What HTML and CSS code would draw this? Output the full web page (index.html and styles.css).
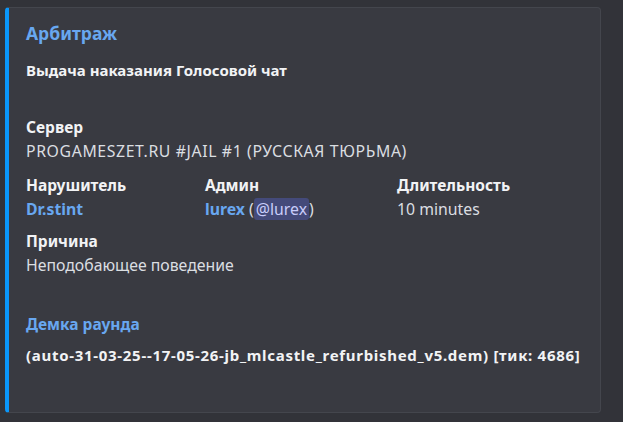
FILE: index.html
```html
<!DOCTYPE html>
<html lang="ru">
<head>
    <meta charset="UTF-8">
    <meta name="viewport" content="width=device-width, initial-scale=1.0">
    <title>Арбитраж</title>
    <link rel="stylesheet" href="styles.css">
</head>
<body>
    <div class="embed">
        <div class="embed-title">Арбитраж</div>
        <div class="embed-desc">Выдача наказания Голосовой чат</div>

        <div class="field field-server">
            <div class="field-name">Сервер</div>
            <div class="field-value caps">PROGAMESZET.RU #JAIL #1 (РУССКАЯ ТЮРЬМА)</div>
        </div>

        <div class="field-row">
            <div class="field">
                <div class="field-name">Нарушитель</div>
                <div class="field-value"><span class="link">Dr.stint</span></div>
            </div>
            <div class="field">
                <div class="field-name">Админ</div>
                <div class="field-value"><span class="link">lurex</span> (<span class="mention">@lurex</span>)</div>
            </div>
            <div class="field">
                <div class="field-name">Длительность</div>
                <div class="field-value">10 minutes</div>
            </div>
        </div>

        <div class="field field-reason">
            <div class="field-name">Причина</div>
            <div class="field-value">Неподобающее поведение</div>
        </div>

        <div class="field field-demo">
            <div class="field-name link">Демка раунда</div>
            <div class="field-value demo-file">(auto-31-03-25--17-05-26-jb_mlcastle_refurbished_v5.dem) [тик: 4686]</div>
        </div>
    </div>
</body>
</html>
```

FILE: styles.css
```css
body {
    margin: 0;
    padding: 7px 22px 9px 5px;
    background: #323339;
    font-family: 'Noto Sans', sans-serif;
    color: #dbdee1;
}
.embed {
    height: 406px;
    box-sizing: border-box;
    background: #393a41;
    border: 1px solid #44464d;
    border-left: 4px solid #0a97fb;
    border-radius: 4px;
    padding: 13px 16px 0 17px;
}
.embed-title {
    font-size: 17.5px;
    line-height: 24px;
    font-weight: 700;
    color: #68a7f0;
}
.embed-desc {
    margin-top: 13px;
    font-size: 15px;
    line-height: 24px;
    font-weight: 700;
    color: #f2f3f5;
}
.field-server {
    margin-top: 33px;
}
.field-name {
    font-size: 15.5px;
    line-height: 24px;
    font-weight: 700;
    color: #f2f3f5;
}
.field-value {
    font-size: 15.8px;
    line-height: 24px;
}
.caps {
    letter-spacing: 0.62px;
}
.field-row {
    display: grid;
    grid-template-columns: 179px 192px auto;
    margin-top: 10px;
}
.field-reason {
    margin-top: 8px;
}
.field-demo {
    margin-top: 35px;
}
.field-demo .field-name {
    margin-bottom: 7px;
}
.link {
    color: #68a7f0;
    font-weight: 700;
}
.field-name.link {
    color: #68a7f0;
}
.mention {
    background: #444a7a;
    color: #c9cdfb;
    border-radius: 3px;
    padding: 0 2px;
}
.demo-file {
    font-size: 15px;
    font-weight: 700;
    letter-spacing: 0.7px;
    color: #f2f3f5;
}
```
